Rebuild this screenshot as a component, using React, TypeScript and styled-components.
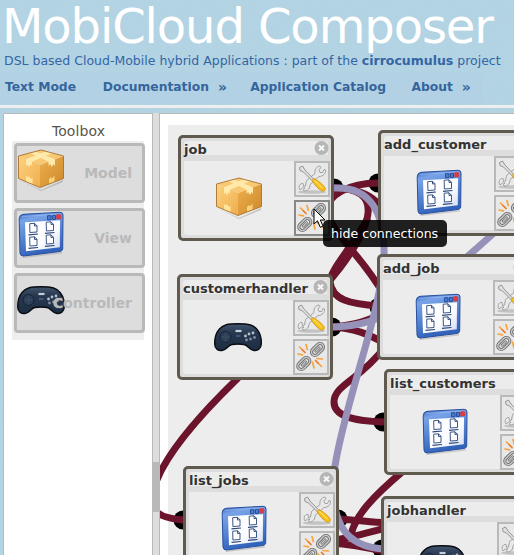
import React from "react";
import styled, { createGlobalStyle } from "styled-components";

const GlobalStyle = createGlobalStyle`
  html, body { margin: 0; padding: 0; }
  body {
    font-family: "DejaVu Sans", Verdana, sans-serif;
    font-size: 13px;
    overflow: hidden;
  }
  * { box-sizing: border-box; }
`;

const Page = styled.div`
  position: relative;
  width: 514px;
  height: 555px;
  display: flex;
  flex-direction: column;
  background: #b2d3e3;
  overflow: hidden;
`;

const Texture = styled.svg`
  position: absolute;
  inset: 0;
  width: 514px;
  height: 555px;
`;

const Header = styled.header`
  position: relative;
  height: 108px;
  flex: none;
  white-space: nowrap;
  border-bottom: 3px solid #eeeeee;
`;

const Title = styled.h1`
  margin: 0;
  padding-left: 2px;
  height: 52px;
  line-height: 53px;
  font-size: 48px;
  font-weight: 400;
  letter-spacing: -1.1px;
  color: #fff;
`;

const Tagline = styled.div`
  height: 20px;
  line-height: 18px;
  padding-left: 4px;
  font-size: 12.5px;
  color: #3465a4;
`;

const Nav = styled.nav`
  display: flex;
  width: 482px;
  height: 32px;
  padding: 2px 0 0 5px;
  line-height: 26px;
  background: #b3d1e4;
  color: #34659c;
  font-weight: 700;
  font-size: 12.3px;
`;

const NavItem = styled.a<{ $gap: number }>`
  display: flex;
  gap: 9px;
  margin-right: ${(p) => p.$gap}px;

  span { font-size: 14px; }
`;

const Main = styled.main`
  position: relative;
  flex: 1;
  display: flex;
  margin-top: 5px;
`;

const Sidebar = styled.aside`
  width: 150px;
  margin-left: 3px;
  padding: 8px 0 0 9px;
  flex: none;
  background: #fff;
  border: 1px solid #b9b9b9;
  border-bottom: 0;
`;

const ToolboxTitle = styled.div`
  width: 131px;
  height: 19px;
  line-height: 19px;
  font-size: 14px;
  letter-spacing: 0.1px;
  text-align: center;
  color: #5a554c;
`;

const ToolList = styled.div`
  display: flex;
  flex-direction: column;
  gap: 5px;
  width: 132px;
  height: 199px;
  margin-left: -1px;
  padding: 2px 0 0 2px;
  background: #eee;
`;

const ToolItem = styled.div`
  position: relative;
  width: 131px;
  height: 60px;
  flex: none;
  display: flex;
  align-items: center;
  justify-content: flex-end;
  padding-right: 10px;
  border: 3px solid #b9b9b9;
  border-radius: 4px;
  background: #ddd;
  color: #b9b9b9;
  font-weight: 700;
  font-size: 14px;

  svg {
    position: absolute;
    left: 0;
    top: 0;
  }
  span {
    position: relative;
    text-shadow: 0 0 1px #ddd;
  }
`;

const Splitter = styled.div`
  width: 7px;
  flex: none;
  padding-top: 349px;
  background: #ddd;
`;

const Grip = styled.div`
  height: 50px;
  background: #b9b9b9;
`;

const Workspace = styled.section`
  position: relative;
  width: 355px;
  flex: none;
  padding: 11px 0 0 8px;
  background: #fff;
  border: solid #b9b9b9;
  border-width: 1px 0 0 1px;
  margin-left: -1px;
  overflow: hidden;
`;

const Sheet = styled.div`
  height: 440px;
  background: #ededed;
`;

const Wires = styled.svg`
  position: absolute;
  left: 0;
  top: 0;
`;

const NodeBox = styled.div<{ $x: number; $y: number }>`
  position: absolute;
  left: ${(p) => p.$x - 160}px;
  top: ${(p) => p.$y - 114}px;
  width: 156px;
  height: 106px;
  padding: 3px;
  display: flex;
  flex-direction: column;
  gap: 6px;
  background: #ddd;
  border: 3px solid #5f594e;
  border-radius: 5px;
`;

const NodeHead = styled.div`
  display: flex;
  align-items: center;
  justify-content: space-between;
  height: 14px;
  border-radius: 3px 3px 0 0;
  background: #ececec;
  color: #333;
  font-size: 13px;
  font-weight: 700;
  line-height: 16px;

  span { position: relative; top: 2px; }
  svg { margin-right: -1px; }
`;

const NodeBody = styled.div`
  display: flex;
  justify-content: space-between;
  height: 74px;
  padding-left: 31px;
  margin-right: -2px;
  border-radius: 0 0 3px 3px;
  background: linear-gradient(to right, #ececec 144px, #ddd 144px);

  > svg { margin-top: 13px; }
`;

const NodeActions = styled.div`
  display: flex;
  flex-direction: column;
  gap: 3px;
`;

const ActionButton = styled.button<{ $active?: boolean }>`
  display: block;
  flex: none;
  width: 36px;
  height: 36px;
  padding: 0;
  border: 2px solid ${(p) => (p.$active ? "#888" : "#b9b9b9")};
  background: #e8e8e8;
  svg { display: block; }
`;

const Tooltip = styled.div`
  position: absolute;
  left: 163px;
  top: 106px;
  width: 124px;
  height: 27px;
  line-height: 27px;
  padding-left: 8px;
  border-radius: 5px;
  background: rgba(0, 0, 0, 0.87);
  color: #fff;
  font-size: 12.6px;
  white-space: nowrap;
`;

const Pointer = styled.svg`
  position: absolute;
  left: 153px;
  top: 94px;
`;

type Kind = "model" | "view" | "controller";

const FILE_SPOTS: [number, number][] = [
  [12, 12],
  [28.5, 10.5],
  [12, 25.5],
  [28.5, 23.5],
];

const Defs = () => (
  <svg width="0" height="0" style={{ position: "absolute" }}>
    <defs>
      <linearGradient id="boxL" x1="0" y1="0" x2="1" y2="1">
        <stop offset="0" stopColor="#fdd27c" />
        <stop offset="1" stopColor="#efae50" />
      </linearGradient>
      <linearGradient id="boxR" x1="0" y1="0" x2="1" y2="1">
        <stop offset="0" stopColor="#efb04e" />
        <stop offset="1" stopColor="#cc8829" />
      </linearGradient>
      <linearGradient id="win" x1="0" y1="0" x2="0.3" y2="1">
        <stop offset="0" stopColor="#3566bd" />
        <stop offset=".2" stopColor="#78a3e8" />
        <stop offset="1" stopColor="#3263ba" />
      </linearGradient>
      <linearGradient id="paper" x1="0" y1="0" x2="1" y2="1">
        <stop offset="0" stopColor="#fff" />
        <stop offset=".6" stopColor="#fbfcff" />
        <stop offset="1" stopColor="#cfdaf0" />
      </linearGradient>
      <linearGradient id="pad" x1="0" y1="0" x2="0" y2="1">
        <stop offset="0" stopColor="#42566f" />
        <stop offset=".35" stopColor="#26374e" />
        <stop offset="1" stopColor="#1d2d44" />
      </linearGradient>
    </defs>
  </svg>
);

const KindIcon = ({ kind }: { kind: Kind }) => (
  <svg width="48" height="48" viewBox="0 0 48 48" overflow="visible">
    {kind === "model" && (
      <g>
        <path d="M2 34 L24 44 L46 34 L46 36 L24 45Z" fill="#777" opacity=".35" />
        <path d="M1.5 10 L23 19 L23 41.500 L1.5 32.500Z" fill="url(#boxL)" />
        <path d="M46.500 10 L23 19 L23 41.500 L46.500 32.500Z" fill="url(#boxR)" />
        <path d="M24 4 L46.500 10 L23 19 L1.500 10Z" fill="#f8c872" />
        <path d="M13 7 L18.500 5.500 L38 13.200 L38 20 L36.500 18 L35 21 L33 18 L31.500 20 L31.500 15.700Z" fill="#ffe9ab" />
        <path d="M29 5.300 L35.500 7 L15 15.700 L15 20 L13.500 18 L12 21.500 L10.500 18.500 L9 20 L9 13.200Z" fill="#ffe9ab" />
        <path d="M9 29.500 L11 31.500 L12 30 L14 33 L15.500 31.500 L15.500 38.300 L9 35.600Z" fill="#ffe49a" />
        <path d="M32 33 L34 31 L35 32.500 L37.500 29.500 L37.500 35.500 L32 37.800Z" fill="#f9d27d" />
        <path d="M24 4 L46.500 10 L46.500 32.500 L23 41.500 L1.500 32.500 L1.500 10Z" fill="none" stroke="#a8702f" strokeWidth=".9" strokeLinejoin="round" />
      </g>
    )}
    {kind === "view" && (
      <g>
        <path d="M5 45.500 L45 41 L45 42.500 L6 47Z" fill="#888" opacity=".35" />
        <path d="M6 3.300 L43 1.300 Q46 1.200 46 4 L45.700 38 Q45.400 40 43 40.500 L6.500 45 Q3.300 45.200 3 42 L2.200 8 Q2.300 3.700 6 3.300Z" fill="url(#win)" stroke="#284f9e" strokeWidth="1" />
        <path d="M5 5.500 L44 3" stroke="#9cbdf2" strokeWidth="1" opacity=".6" />
        <path d="M8 11.200 L43 9.200 L42.800 36.300 L9 40.300Z" fill="url(#paper)" />
        <path d="M30.500 4.700h3.500v4h-3.500zM35.500 4.400h3v4h-3z" fill="#4b7ad0" stroke="#234894" strokeWidth=".9" />
        <rect x="39.500" y="3.500" width="4.300" height="4.500" rx=".5" fill="#e23b3b" stroke="#c23b48" strokeWidth=".5" />
        {FILE_SPOTS.map(([x, y]) => (
          <g key={`${x}-${y}`} transform={`translate(${x} ${y})`} stroke="#294477" fill="none">
            <path d="M.700 .700 L5.500 .300 L8 2.800 L8 9 L.900 9.500Z M5.500 .300 L5.500 3 L8 2.800" fill="#fdfdff" strokeWidth=".9" />
            <path d="M-.500 11.800 L9 11" strokeWidth="1.200" />
          </g>
        ))}
      </g>
    )}
    {kind === "controller" && (
      <g>
        <path d="M24 10.700 C35 10.700 40 12 43.500 17 C46.500 21 47.500 27 47.300 31 C47 36 43.500 38 40 37.500 C35 37 34 32 30 31.500 C27 31 21 31 18 31.500 C14 32 13 37 8 37.500 C4 38 .8 35.500 .7 31 C.6 26 2 20 5 16.500 C9 11.500 14 10.700 24 10.700Z" fill="url(#pad)" stroke="#090c11" strokeWidth="1.400" />
        <circle cx="11.500" cy="24" r="5.500" fill="#2b3e56" stroke="#172438" strokeWidth="1" />
        <path d="M11.500 20.500v7M8 24h7" stroke="#34485f" strokeWidth="2" />
        <path d="M21.500 18h6" stroke="#c5ced9" strokeWidth="2.200" />
        <path d="M22 23h4.500" stroke="#53709d" strokeWidth="1.200" />
        <g fill="#b7c0ca">
          <circle cx="31.500" cy="23" r="1.400" />
          <circle cx="35" cy="21" r="1.400" />
          <circle cx="39" cy="20" r="1.400" />
        </g>
        <g fill="#7f8c9c">
          <circle cx="32.500" cy="27" r="1.400" />
          <circle cx="36.500" cy="26" r="1.400" />
          <circle cx="40.500" cy="24.500" r="1.400" />
        </g>
      </g>
    )}
  </svg>
);

const ToolsIcon = () => (
  <svg width="32" height="32" viewBox="0 0 32 32">
    <ellipse cx="16" cy="29" rx="14" ry="1.800" fill="#aaa" opacity=".6" />
    <path d="M4 27 C2.500 25 3 21.500 5.500 20.500 L7 20.500 L7.500 23.500 L9.500 23 L10 20 C10.500 19 10.500 18 10.500 17.500 L19 10.500 C18.500 7 20 3.500 24 3 L25 4.500 L22.800 7 L24 9.500 L26.500 9.500 L28 6.500 L29.500 7 C30 10.500 27 13.500 23 13.500 L14 21.500 C14 25 12.500 28 8 28 L7.500 26.500 L9 25 L6.500 25Z" fill="#e9e9e9" stroke="#999" strokeWidth=".9" />
    <path d="M3.500 4.500 L6.500 3 L9 7 L18 16.500 L16.500 18 L7.500 9 L4 7.500Z" fill="#e0e0e0" stroke="#8c8c8c" strokeWidth=".9" />
    <path d="M16 17.500 L18 15.500 C21 17 28 22 29.300 25.500 C29.500 27.500 28 28.500 26 28 C22 26 18 21 16 17.500Z" fill="#f8bf16" stroke="#d0960f" strokeWidth=".9" />
    <path d="M18.500 17.500 L26.500 25" stroke="#fddb62" strokeWidth="1.200" />
  </svg>
);

const CHAIN_PARTS = ["translate(22.500 8.500) rotate(-45)", "translate(8.800 22.500) rotate(-45)"];

const ChainIcon = () => (
  <svg width="32" height="32" viewBox="0 0 32 32" fill="none" strokeLinecap="round">
    <path d="M4.500 6 L10 11.500 M3 13 L7.500 13.800 M11 3.500 L12.300 8.500" stroke="#f8a53c" strokeWidth="1.700" />
    <path d="M17.500 21 L19 27 M20.500 19.500 L26.500 25.500 M22 17.500 L27.500 18" stroke="#f8a53c" strokeWidth="1.700" />
    <path d="M7 8.500 L10 11.500 M20.500 19.500 L23.500 22.500" stroke="#ee7433" strokeWidth="1.200" />
    {CHAIN_PARTS.map((t) => (
      <g key={t} transform={t}>
        <rect x="-7" y="-3.500" width="14" height="7" rx="3.500" stroke="#707070" strokeWidth="3.200" />
        <rect x="-7" y="-3.500" width="14" height="7" rx="3.500" stroke="#c8c8c8" strokeWidth="1.400" />
        <path d="M-2.500 0h5" stroke="#707070" strokeWidth="2.600" />
        <path d="M-2.500 0h5" stroke="#d2d2d2" strokeWidth="1.100" />
      </g>
    ))}
  </svg>
);

const CloseIcon = () => (
  <svg width="16" height="16" viewBox="0 0 16 16" overflow="visible">
    <circle cx="8.500" cy="8" r="7" fill="#b6b6b6" />
    <path d="M6 5.500l5 5M11 5.500l-5 5" stroke="#f7f7f7" strokeWidth="2" />
  </svg>
);

const TOOLS: { kind: Kind; label: string }[] = [
  { kind: "model", label: "Model" },
  { kind: "view", label: "View" },
  { kind: "controller", label: "Controller" },
];

const NODES: { name: string; kind: Kind; x: number; y: number; active?: boolean }[] = [
  { name: "job", kind: "model", x: 178, y: 135, active: true },
  { name: "customerhandler", kind: "controller", x: 177, y: 274 },
  { name: "add_customer", kind: "view", x: 378, y: 130 },
  { name: "add_job", kind: "view", x: 377, y: 254 },
  { name: "list_customers", kind: "view", x: 384, y: 369 },
  { name: "jobhandler", kind: "controller", x: 381, y: 496 },
  { name: "list_jobs", kind: "view", x: 183, y: 466 },
];

const PORTS = [
  [334, 188], [378, 183], [332, 327], [379, 307], [383, 422], [382, 549], [338, 519], [183, 520],
];

const MAROON = [
  "M334 188 C385 188 372 225 340 268 C300 320 270 345 236 380 C200 415 165 455 155 485 C148 510 155 518 184 520",
  "M378 183 C350 183 325 195 328 212 C332 235 362 255 384 295",
  "M334 188 C355 188 378 195 384 215",
  "M368 218 C350 250 330 270 330 282 C332 300 350 304 379 306",
  "M332 327 C352 325 370 322 390 308",
  "M332 327 C355 328 370 335 384 343",
  "M384 348 C360 380 334 385 334 402 C334 415 350 421 384 422",
  "M402 472 C375 495 355 515 351 535",
  "M338 519 C355 520 370 522 386 523",
  "M330 541 C350 538 370 532 386 528",
  "M330 543 C350 544 370 548 386 552",
];

const LAVENDER = [
  "M334 188 C372 186 383 215 384 248 C386 300 345 400 335 466 C328 522 345 548 386 549",
  "M332 327 C385 326 420 300 495 232",
];

export default function App() {
  return (
    <Page>
      <GlobalStyle />
      <Defs />
      <Texture>
        <filter id="grain">
          <feTurbulence type="fractalNoise" baseFrequency=".45" numOctaves="2" seed="4" />
          <feColorMatrix values="0 0 0 0 .55  0 0 0 0 .72  0 0 0 0 .8  .9 0 0 0 -.3" />
        </filter>
        <rect width="514" height="555" filter="url(#grain)" opacity=".4" />
      </Texture>
      <Header>
        <Title>MobiCloud Composer</Title>
        <Tagline>
          DSL based Cloud-Mobile hybrid Applications : part of the <b>cirrocumulus</b> project
        </Tagline>
        <Nav>
          <NavItem $gap={26.8}>Text Mode</NavItem>
          <NavItem $gap={23.3}>Documentation <span>»</span></NavItem>
          <NavItem $gap={25.5}>Application Catalog</NavItem>
          <NavItem $gap={0}>About <span>»</span></NavItem>
        </Nav>
      </Header>
      <Main>
        <Sidebar>
          <ToolboxTitle>Toolbox</ToolboxTitle>
          <ToolList>
            {TOOLS.map((t) => (
              <ToolItem key={t.kind}>
                <KindIcon kind={t.kind} />
                <span>{t.label}</span>
              </ToolItem>
            ))}
          </ToolList>
        </Sidebar>
        <Splitter>
          <Grip />
        </Splitter>
        <Workspace>
          <Sheet />
          <Wires width="354" height="441" viewBox="160 114 354 441" fill="none" strokeWidth="7">
            {PORTS.map(([x, y]) => (
              <circle key={`${x}-${y}`} cx={x} cy={y} r="9.500" fill="#000" />
            ))}
            {MAROON.map((d) => <path key={d} d={d} stroke="#6b142b" />)}
            {LAVENDER.map((d) => <path key={d} d={d} stroke="#9691b9" />)}
          </Wires>
          {NODES.map((n) => (
            <NodeBox key={n.name} $x={n.x} $y={n.y}>
              <NodeHead>
                <span>{n.name}</span>
                <CloseIcon />
              </NodeHead>
              <NodeBody>
                <KindIcon kind={n.kind} />
                <NodeActions>
                  <ActionButton><ToolsIcon /></ActionButton>
                  <ActionButton $active={n.active}><ChainIcon /></ActionButton>
                </NodeActions>
              </NodeBody>
            </NodeBox>
          ))}
          <Tooltip>hide connections</Tooltip>
          <Pointer width="13" height="21" viewBox="0 0 13 21">
            <path d="M1 1 L1 16 L4.500 12.800 L7.300 19.300 L10 18 L7.300 12 L12 12Z" fill="#fff" stroke="#000" strokeWidth="1" />
          </Pointer>
        </Workspace>
      </Main>
    </Page>
  );
}
